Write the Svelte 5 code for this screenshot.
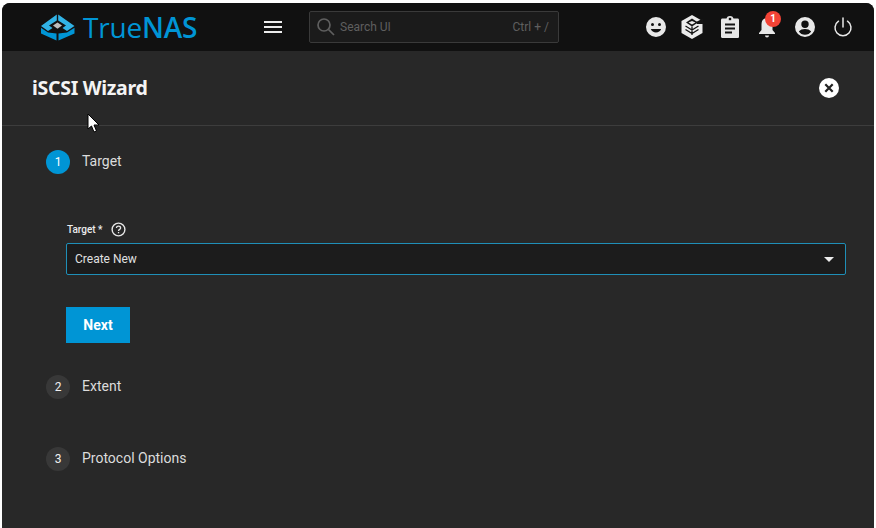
<script>
  const steps = [
    { n: 2, label: 'Extent' },
    { n: 3, label: 'Protocol Options' }
  ];
</script>

<div class="shell">
  <header class="topbar">
    <div class="brand">
      <svg class="logo" width="36" height="28" viewBox="0 0 36 28">
        <path fill="#31b3e6" d="M16.800 1.500 V7.500 L9 12.500 L12.500 15 L8 18 L1 13 Z M18.200 1.500 L34.500 13 L27 18 L22.500 15 L26 12.500 L18.200 7.500 Z"/>
        <path fill="#bdbdbd" d="M17.500 9.500 L22 12.500 L17.500 15.800 L13 12.500 Z"/>
        <path fill="#0095d5" d="M1 14.800 L8 19.500 L16.500 20.500 V27.500 L1 20.500 Z M34.500 14.800 L27 19.500 L18.500 20.500 V27.500 L34.500 20.500 Z"/>
      </svg>
      <span class="wordmark"><span class="thin">True</span><span class="bold">NAS</span></span>
    </div>
    <div class="menu" aria-label="Menu"><i></i><i></i><i></i></div>
    <div class="search">
      <svg width="20" height="20" viewBox="0 0 20 20" fill="none" stroke="#5f5f5f" stroke-width="1.700">
        <circle cx="8" cy="8" r="6"/><path d="M12.500 12.500 L18 18"/>
      </svg>
      <span class="placeholder">Search UI</span>
      <span class="shortcut">Ctrl + /</span>
    </div>
    <div class="actions">
      <svg class="smile" width="24" height="24" viewBox="0 0 24 24"><path fill="#e8e8e8" d="M12 2a10 10 0 1 0 0 20 10 10 0 0 0 0-20zM8.500 8A1.500 1.500 0 1 1 8.500 11 1.500 1.500 0 0 1 8.500 8zm7 0a1.500 1.500 0 1 1 0 3 1.500 1.500 0 0 1 0-3zM12 17.500c-2.400 0-4.400-1.500-5.200-3.500h10.400c-.8 2-2.800 3.500-5.200 3.500z"/></svg>
      <svg class="cube" width="24" height="26" viewBox="0 0 24 26">
        <path fill="#ececec" d="M12 1 L22.500 7 V19 L12 25 L1.500 19 V7 Z"/>
        <path fill="#141414" d="M12 4.500 L18 8.500 L12 12.500 L6 8.500 Z"/>
        <path fill="#ececec" d="M12 7 L15.500 8.500 L12 10.500 L8.500 8.500 Z"/>
        <path fill="#141414" d="M16 8 L23 4.500 V10 L17 10 Z"/>
        <path fill="none" stroke="#141414" stroke-width="1.300" d="M5.500 12 L12 16 L18.500 12 M5.500 15.500 L12 19.500 L18.500 15.500 M12 12.500 V21"/>
      </svg>
      <svg class="clip" width="20" height="24" viewBox="0 0 20 24">
        <path fill="#e8e8e8" d="M2.500 3.500H6.500C7 1.800 8.300 1 10 1s3 .8 3.500 2.500H17.500C18.600 3.500 19 4.200 19 5V21.500C19 22.500 18.400 23 17.500 23H2.500C1.500 23 1 22.400 1 21.500V5C1 4.200 1.500 3.500 2.500 3.500Z"/>
        <rect x="8.800" y="2.800" width="2.400" height="2.400" fill="#141414"/>
        <path stroke="#141414" stroke-width="1.900" d="M5 9.500H15M5 13.500H15M5 17.500H12"/>
      </svg>
      <div class="bell">
        <svg width="22" height="24" viewBox="0 0 22 24"><path fill="#e8e8e8" d="M11 3c-3.600 0-5.500 2.900-5.500 6.500V15L3 18v1h16v-1l-2.500-3V9.500C16.500 5.900 14.600 3 11 3zM9 20.500h4a2 2 0 0 1-4 0z"/></svg>
        <span class="badge">1</span>
      </div>
      <svg width="24" height="24" viewBox="0 0 24 24"><path fill="#e8e8e8" d="M12 2a10 10 0 1 0 0 20 10 10 0 0 0 0-20zm0 3.500a3.700 3.700 0 1 1 0 7.400 3.700 3.700 0 0 1 0-7.400zm0 14.300c-2.600 0-4.900-1.300-6.200-3.300 1.400-1.700 3.700-2.500 6.200-2.500s4.800.8 6.200 2.500c-1.300 2-3.600 3.300-6.200 3.300z"/></svg>
      <svg width="22" height="22" viewBox="0 0 22 22" fill="none" stroke="#e8e8e8" stroke-width="1.500" stroke-linecap="round"><path d="M11 2V11"/><path d="M6.500 5.200A8 8 0 1 0 15.500 5.200"/></svg>
    </div>
  </header>

  <main class="panel">
    <div class="panel-head">
      <h1>iSCSI Wizard</h1>
      <button class="close" aria-label="Close">
        <svg width="20" height="20" viewBox="0 0 20 20">
          <circle cx="10" cy="10" r="10" fill="#fff"/>
          <path d="M6.300 6.300 L13.700 13.700 M13.700 6.300 L6.300 13.700" stroke="#222" stroke-width="2.200"/>
        </svg>
      </button>
    </div>

    <section class="steps">
      <div class="step">
        <span class="num active">1</span>
        <span class="step-label">Target</span>
      </div>
      <div class="step-body">
        <div class="field-label">
          <span>Target *</span>
          <svg width="15" height="15" viewBox="0 0 15 15" fill="none">
            <circle cx="7.500" cy="7.500" r="6.400" stroke="#e6e6e6" stroke-width="1.400"/>
            <path d="M5.400 6C5.500 4.800 6.400 4.200 7.500 4.200 8.700 4.200 9.600 5 9.600 6 9.600 7.400 7.500 7.400 7.500 9" stroke="#e6e6e6" stroke-width="1.300"/>
            <rect x="6.900" y="10" width="1.300" height="1.300" fill="#e6e6e6"/>
          </svg>
        </div>
        <div class="select">
          <span>Create New</span>
          <i class="caret"></i>
        </div>
        <button class="next">Next</button>
      </div>
      {#each steps as s}
        <div class="step later">
          <span class="num">{s.n}</span>
          <span class="step-label">{s.label}</span>
        </div>
      {/each}
    </section>

    <svg class="cursor" width="14" height="21" viewBox="0 0 14 21">
      <path d="M1 1 V16 L4.500 13 L7 19 L9.500 18 L7 12 L12 12 Z" fill="#fff" stroke="#000" stroke-width="1"/>
    </svg>
  </main>
</div>

<style>
  :global(body) {
    margin: 0;
    background: #fff;
  }
  .shell {
    height: 525px;
    margin: 3px 2px 0;
    background: #282828;
    border-radius: 8px 8px 0 0;
    overflow: hidden;
    font-family: "Noto Sans", sans-serif;
    color: #e4e4e4;
  }
  .topbar {
    height: 48px;
    background: #111111;
    display: flex;
    align-items: center;
  }
  .brand {
    width: 262px;
    padding-left: 38px;
    box-sizing: border-box;
    display: flex;
    align-items: center;
    gap: 7px;
    flex: none;
  }
  .logo { flex: none; }
  .wordmark {
    font-family: "Open Sans", sans-serif;
    font-size: 28px;
    letter-spacing: -0.2px;
    color: #0095d5;
    line-height: 1;
  }
  .thin { font-weight: 400; }
  .bold { font-weight: 600; }
  .menu {
    width: 18px;
    display: flex;
    flex-direction: column;
    gap: 3px;
    flex: none;
  }
  .menu i {
    height: 2px;
    background: #ececec;
  }
  .search {
    margin-left: 27px;
    width: 250px;
    height: 32px;
    box-sizing: border-box;
    border: 1px solid #3a3a3a;
    border-radius: 2px;
    background: #1b1b1b;
    display: flex;
    align-items: center;
    padding: 0 9px 0 6px;
    font-size: 12px;
    color: #5f5f5f;
    font-family: "Roboto", sans-serif;
    flex: none;
  }
  .placeholder {
    margin-left: 4px;
    flex: 1;
  }
  .actions {
    margin-left: auto;
    margin-right: 20px;
    display: flex;
    align-items: center;
    gap: 15px;
  }
  .smile { margin-right: -3px; }
  .cube { margin-right: 1px; }
  .clip { margin-right: 1px; }
  .bell {
    position: relative;
    width: 22px;
    height: 24px;
  }
  .bell svg { display: block; }
  .badge {
    position: absolute;
    top: -4px;
    right: -3px;
    width: 16px;
    height: 16px;
    border-radius: 50%;
    background: #f44336;
    color: #fff;
    font: 700 10px/16px "Roboto", sans-serif;
    text-align: center;
  }
  .panel {
    position: relative;
    height: 477px;
  }
  .panel-head {
    height: 75px;
    box-sizing: border-box;
    border-bottom: 1px solid #3d3d3d;
    display: flex;
    align-items: center;
    justify-content: space-between;
    padding: 0 35px 0 30px;
  }
  h1 {
    margin: 0 0 2px;
    font-size: 19.500px;
    font-weight: 700;
    letter-spacing: -0.3px;
    color: #f4f4f4;
  }
  .close {
    all: unset;
    display: block;
    width: 20px;
    height: 20px;
  }
  .close svg { display: block; }
  .steps {
    padding: 24px 28px 0 44px;
    font-family: "Roboto", sans-serif;
  }
  .step {
    display: flex;
    align-items: center;
    gap: 12px;
    height: 24px;
  }
  .step-label {
    font-size: 14px;
    color: #dcdcdc;
    position: relative;
    top: -1px;
  }
  .num {
    width: 24px;
    height: 24px;
    border-radius: 50%;
    background: #383838;
    color: #f0f0f0;
    font-size: 12px;
    line-height: 24px;
    text-align: center;
    flex: none;
  }
  .num.active {
    background: #0095d5;
    color: #fff;
  }
  .later { margin-bottom: 48px; }
  .step-body {
    padding: 48px 0 0 20px;
    height: 201px;
    box-sizing: border-box;
  }
  .field-label {
    display: flex;
    align-items: center;
    gap: 8px;
    font-size: 10px;
    font-weight: 500;
    color: #ececec;
    height: 15px;
    padding-left: 1px;
  }
  .select {
    margin-top: 6px;
    height: 32px;
    box-sizing: border-box;
    border: 1px solid #1f8fb8;
    border-radius: 2px;
    background: #1c1c1c;
    display: flex;
    align-items: center;
    justify-content: space-between;
    padding: 0 11px 0 8px;
    font-size: 12px;
    color: #e0e0e0;
  }
  .caret {
    width: 0;
    height: 0;
    border-left: 5px solid transparent;
    border-right: 5px solid transparent;
    border-top: 5px solid #ececec;
  }
  .next {
    all: unset;
    display: block;
    margin-top: 32px;
    width: 64px;
    height: 36px;
    background: #0095d5;
    color: #fff;
    font: 700 14px/36px "Roboto", sans-serif;
    text-align: center;
  }
  .cursor {
    position: absolute;
    left: 85px;
    top: 62px;
  }
</style>
